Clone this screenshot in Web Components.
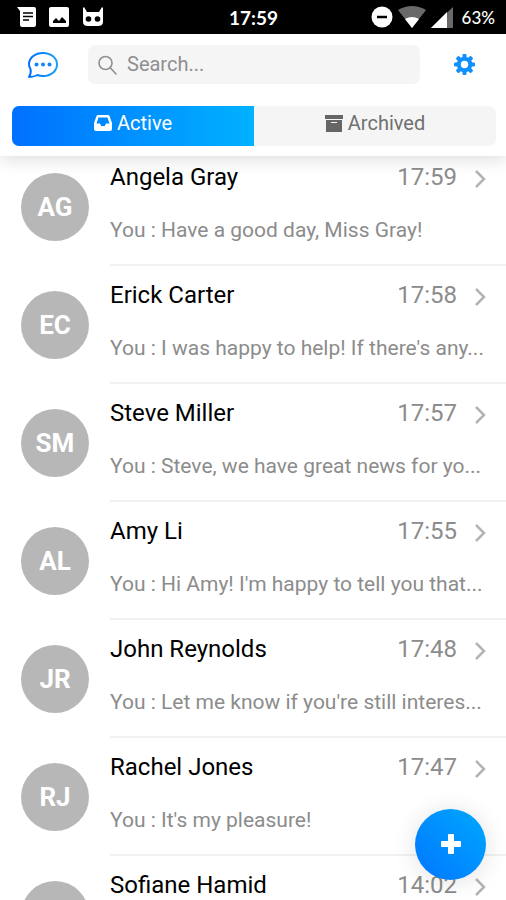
<!DOCTYPE html>
<html lang="en">
<head>
<meta charset="utf-8">
<meta name="viewport" content="width=device-width, initial-scale=1">
<title>Messages</title>
<style>
  html, body { height: 100%; margin: 0; }
  body {
    font-family: Roboto, "Liberation Sans", sans-serif;
    background: #fff;
    color: #111;
    overflow: hidden;
    --grad: linear-gradient(90deg, #0070ff, #00b2ff);
    --muted: #8c8c8c;
    --field: #f5f5f5;
  }
</style>
</head>
<body>
<chat-app></chat-app>

<script>
const conversations = [
  { initials: 'AG', name: 'Angela Gray', time: '17:59', text: 'You : Have a good day, Miss Gray!' },
  { initials: 'EC', name: 'Erick Carter', time: '17:58', text: "You : I was happy to help! If there's any..." },
  { initials: 'SM', name: 'Steve Miller', time: '17:57', text: 'You : Steve, we have great news for yo...' },
  { initials: 'AL', name: 'Amy Li', time: '17:55', text: "You : Hi Amy! I'm happy to tell you that..." },
  { initials: 'JR', name: 'John Reynolds', time: '17:48', text: "You : Let me know if you're still interes..." },
  { initials: 'RJ', name: 'Rachel Jones', time: '17:47', text: "You : It's my pleasure!" },
  { initials: '', name: 'Sofiane Hamid', time: '14:02', text: '' },
];

class StatusBar extends HTMLElement {
  constructor() {
    super();
    this.attachShadow({ mode: 'open' }).innerHTML = `
      <style>
        :host {
          display: grid;
          grid-template-columns: 1fr auto 1fr;
          align-items: center;
          height: 34px;
          padding: 0 11px 0 17px;
          box-sizing: border-box;
          background: #000;
          color: #fff;
          font-family: Lato, sans-serif;
          font-weight: 700;
        }
        div { display: flex; align-items: center; }
        .left { gap: 13px; }
        .right { justify-content: flex-end; gap: 5px; }
        time { font-size: 19px; padding-right: 5px; }
        .battery { font-size: 17px; font-weight: 500; padding-left: 4px; }
        svg { display: block; }
      </style>
      <div class="left">
        <svg width="19" height="20" viewBox="0 0 19 20"><path fill="#fff" d="M0 0h17q2 0 2 2v16q0 2-2 2H5q-2 0-2-2V4z"/><path stroke="#000" stroke-width="1.600" d="M6 6h10M6 9.500h10M6 13h6"/></svg>
        <svg width="20" height="20" viewBox="0 0 20 20"><rect width="20" height="20" rx="2" fill="#fff"/><path d="M4 16v-2l3-3 3 3 3-4 4 4v2z"/></svg>
        <svg width="22" height="20" viewBox="0 0 22 20"><path fill="#fff" d="M1 1l1-1 3 5h12l3-5 1 1v14q0 4-5 4H6q-5 0-5-4z"/><circle cx="6.500" cy="12" r="2.800"/><circle cx="15.500" cy="12" r="2.800"/></svg>
      </div>
      <time>17:59</time>
      <div class="right">
        <svg width="22" height="22" viewBox="0 0 22 22"><circle cx="11" cy="11" r="10.500" fill="#fff"/><path stroke="#000" stroke-width="2.500" d="M6 11h10"/></svg>
        <svg width="28" height="22" viewBox="0 0 28 22"><path fill="#6a6a6a" d="M0 4q14-8 28 0L14 22z"/><path fill="#fff" d="M7 13q7-4 14 0l-7 9z"/></svg>
        <svg width="22" height="21" viewBox="0 0 22 21"><path fill="#6a6a6a" d="M0 21L22 0v21z"/><path fill="#fff" d="M0 21L16 5v16z"/></svg>
        <span class="battery">63%</span>
      </div>`;
  }
}

class SearchBar extends HTMLElement {
  constructor() {
    super();
    this.attachShadow({ mode: 'open' }).innerHTML = `
      <style>
        :host { display: block; }
        label {
          display: flex;
          align-items: center;
          gap: 10px;
          height: 39px;
          padding: 0 10px;
          border-radius: 7px;
          background: var(--field);
        }
        input {
          flex: 1;
          min-width: 0;
          border: 0;
          padding: 0 0 2px;
          background: none;
          font: inherit;
          font-size: 20px;
          color: #333;
          outline: none;
        }
        input::placeholder { color: #8f8f8f; opacity: 1; }
      </style>
      <label>
        <svg width="19" height="20" viewBox="0 0 19 20" fill="none" stroke="#909090" stroke-width="1.600" stroke-linecap="round"><circle cx="7.500" cy="8" r="6.500"/><path d="M12.500 13l5.500 6"/></svg>
        <input type="text" placeholder="Search..." aria-label="Search">
      </label>`;
  }
}

class TabButton extends HTMLElement {
  constructor() {
    super();
    this.attachShadow({ mode: 'open' }).innerHTML = `
      <style>
        :host { display: block; flex: 1; }
        button {
          display: flex;
          justify-content: center;
          align-items: center;
          gap: 5px;
          width: 100%;
          height: 40px;
          padding: 0 0 6px;
          border: 0;
          background: var(--field);
          color: #707070;
          font: inherit;
          font-size: 20px;
        }
        :host([selected]) button { background: var(--grad); color: #fff; }
      </style>
      <button type="button"><slot name="icon"></slot><slot></slot></button>`;
  }
}

class AppHeader extends HTMLElement {
  constructor() {
    super();
    this.attachShadow({ mode: 'open' }).innerHTML = `
      <style>
        :host {
          display: block;
          position: relative;
          z-index: 1;
          background: #fff;
          padding: 11px 10px 10px 12px;
          box-shadow: 0 4px 16px rgba(0, 0, 0, .13);
        }
        .top { display: flex; align-items: center; }
        .icon {
          display: flex;
          padding: 0;
          border: 0;
          background: none;
        }
        .chat { padding: 0 29px 0 15px; }
        .gear { padding: 0 21px 0 34px; }
        search-bar { flex: 1; }
        nav {
          display: flex;
          margin-top: 22px;
          border-radius: 7px;
          overflow: hidden;
        }
        svg { display: block; }
      </style>
      <div class="top">
        <button class="icon chat" type="button" aria-label="Chats">
          <svg width="32" height="28" viewBox="0 0 32 28" fill="none">
            <defs><linearGradient id="g"><stop stop-color="#006eff"/><stop offset="1" stop-color="#16a0f8"/></linearGradient></defs>
            <path stroke="url(#g)" stroke-width="2" stroke-linejoin="round" d="M2 26Q4.500 22 3.500 18Q2 16 2 13C2 7 8 2 16 2S30 7 30 13.500S24 25 16 25Q13 25 10.500 24Q7 26 2 26z"/>
            <g fill="#1285f8"><circle cx="9.500" cy="13.500" r="2"/><circle cx="16" cy="13.500" r="2"/><circle cx="22.500" cy="13.500" r="2"/></g>
          </svg>
        </button>
        <search-bar></search-bar>
        <button class="icon gear" type="button" aria-label="Settings">
          <svg width="21" height="21" viewBox="0 0 21 21">
            <g fill="#108fff">
              <rect x="8.500" y="0" width="4" height="21" rx="1"/>
              <rect x="8.500" y="0" width="4" height="21" rx="1" transform="rotate(45 10.500 10.500)"/>
              <rect x="8.500" y="0" width="4" height="21" rx="1" transform="rotate(90 10.500 10.500)"/>
              <rect x="8.500" y="0" width="4" height="21" rx="1" transform="rotate(135 10.500 10.500)"/>
              <circle cx="10.500" cy="10.500" r="7.800"/>
            </g>
            <circle cx="10.500" cy="10.500" r="3.700" fill="#fff"/>
          </svg>
        </button>
      </div>
      <nav>
        <tab-button selected>
          <svg slot="icon" width="18" height="16" viewBox="0 0 18 16"><path fill="#fff" fill-rule="evenodd" d="M4 0h10q1 0 1.500 1L18 8v6q0 2-2 2H2q-2 0-2-2V8l2.500-7Q3 0 4 0zM4.500 2.500L2.500 8.500H6l1.200 2.500h3.600L12 8.500h3.500l-2-6z"/></svg>
          Active
        </tab-button>
        <tab-button>
          <svg slot="icon" width="18" height="17" viewBox="0 0 18 17"><path fill="#666" d="M0 0h18v4H0z"/><path fill="#666" fill-rule="evenodd" d="M1 5h16v12H1zM6 7v1h6V7z"/></svg>
          Archived
        </tab-button>
      </nav>`;
  }
}

class ConversationItem extends HTMLElement {
  constructor() {
    super();
    this.attachShadow({ mode: 'open' }).innerHTML = `
      <style>
        :host { display: block; }
        a {
          display: flex;
          align-items: center;
          gap: 21px;
          padding-left: 21px;
          color: inherit;
          text-decoration: none;
        }
        .avatar {
          display: flex;
          flex: none;
          align-items: center;
          justify-content: center;
          width: 68px;
          height: 68px;
          border-radius: 50%;
          background: #b7b7b7;
          color: #fff;
          font-size: 26px;
          font-weight: 700;
        }
        .body {
          flex: 1;
          min-width: 0;
          padding: 14px 20px 20px 0;
          border-bottom: 2px solid #f1f1f1;
        }
        .row { display: flex; align-items: center; }
        .name { flex: 1; font-size: 24px; line-height: 30px; color: #000; }
        .time { font-size: 24px; line-height: 30px; color: var(--muted); }
        svg { margin: 4px 0 0 17px; }
        p {
          min-height: 28px;
          margin: 24px 0 0;
          font-size: 21px;
          line-height: 28px;
          color: var(--muted);
          white-space: nowrap;
        }
      </style>
      <a href="#">
        <span class="avatar"><slot name="initials"></slot></span>
        <div class="body">
          <div class="row">
            <span class="name"><slot name="name"></slot></span>
            <span class="time"><slot name="time"></slot></span>
            <svg width="12" height="18" viewBox="0 0 12 18" fill="none" stroke="#b4b4b4" stroke-width="2.500"><path d="M2 1l8 8-8 8"/></svg>
          </div>
          <p><slot></slot></p>
        </div>
      </a>`;
  }
}

class FabButton extends HTMLElement {
  constructor() {
    super();
    this.attachShadow({ mode: 'open' }).innerHTML = `
      <style>
        :host { position: absolute; right: 20px; bottom: 20px; z-index: 2; }
        button {
          display: flex;
          align-items: center;
          justify-content: center;
          width: 71px;
          height: 71px;
          padding: 0 0 2px;
          border: 0;
          border-radius: 50%;
          background: linear-gradient(45deg, #0076ff, #00a8ff);
          box-shadow: 0 2px 24px rgba(0, 0, 0, .12);
        }
      </style>
      <button type="button" aria-label="New conversation">
        <svg width="22" height="22" viewBox="0 0 22 22" fill="#fff"><rect x="8" y="1" width="6" height="20" rx="1"/><rect x="1" y="8" width="20" height="6" rx="1"/></svg>
      </button>`;
  }
}

class ChatApp extends HTMLElement {
  constructor() {
    super();
    this.attachShadow({ mode: 'open' }).innerHTML = `
      <style>
        :host { display: flex; flex-direction: column; height: 100%; position: relative; }
        status-bar, app-header { flex: none; }
        /* the list starts slightly under the header */
        main { flex: 1; min-height: 0; margin-top: -8px; overflow: hidden; }
      </style>
      <status-bar></status-bar>
      <app-header></app-header>
      <main></main>
      <fab-button></fab-button>`;
  }

  connectedCallback() {
    this.shadowRoot.querySelector('main').innerHTML = conversations.map(c => `
      <conversation-item>
        <span slot="initials">${c.initials}</span>
        <span slot="name">${c.name}</span>
        <time slot="time">${c.time}</time>
        ${c.text}
      </conversation-item>`).join('');
  }
}

customElements.define('status-bar', StatusBar);
customElements.define('search-bar', SearchBar);
customElements.define('tab-button', TabButton);
customElements.define('app-header', AppHeader);
customElements.define('conversation-item', ConversationItem);
customElements.define('fab-button', FabButton);
customElements.define('chat-app', ChatApp);
</script>
</body>
</html>
